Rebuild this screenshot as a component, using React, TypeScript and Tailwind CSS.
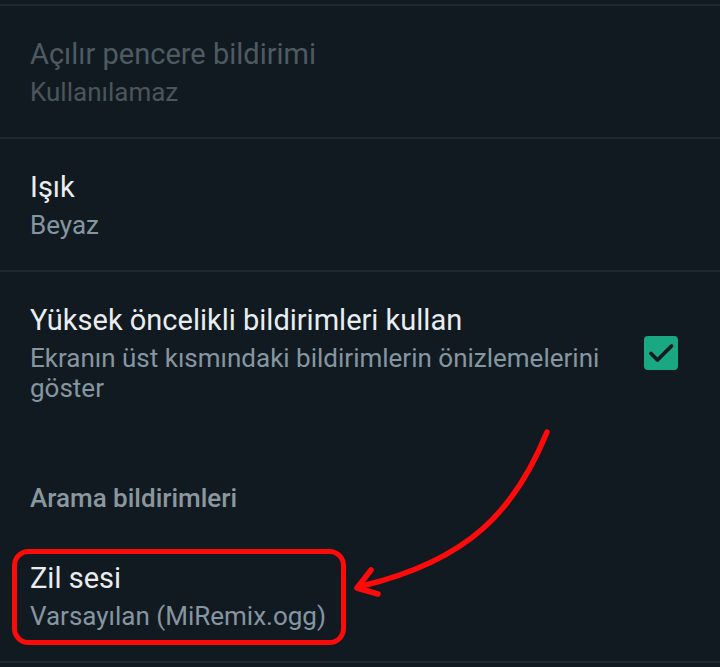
import React from "react";

const font = { fontFamily: "Roboto, 'Noto Sans', sans-serif" };

function Row({
  title,
  subtitle,
  disabled,
  children,
}: {
  title: string;
  subtitle: React.ReactNode;
  disabled?: boolean;
  children?: React.ReactNode;
}) {
  return (
    <div className="flex items-center pl-[30px] pr-[42px] pt-[31px] pb-[30px]">
      <div className="flex-1 min-w-0">
        <div
          className={`text-[29px] leading-[34px] ${disabled ? "text-[#4e5a62]" : "text-[#e9edef]"}`}
        >
          {title}
        </div>
        <div
          className={`mt-[6px] text-[26px] leading-[30px] ${disabled ? "text-[#4a555c]" : "text-[#8696a0]"}`}
        >
          {subtitle}
        </div>
      </div>
      {children}
    </div>
  );
}

function Divider() {
  return <div className="h-[2px] bg-[#1f282f]" />;
}

export default function App() {
  return (
    <div className="relative w-[720px] h-[667px] overflow-hidden bg-[#121a21]" style={font}>
      <div className="h-[4px]" />
      <Divider />
      <Row title="Açılır pencere bildirimi" subtitle="Kullanılamaz" disabled />
      <Divider />
      <Row title="Işık" subtitle="Beyaz" />
      <Divider />
      <Row
        title="Yüksek öncelikli bildirimleri kullan"
        subtitle={
          <span className="block pr-[28px]">
            Ekranın üst kısmındaki bildirimlerin önizlemelerini göster
          </span>
        }
      >
        <div className="w-[34px] h-[34px] rounded-[4px] bg-[#1aa883] shrink-0">
          <svg width="34" height="34" viewBox="0 0 34 34" fill="none">
            <path d="M7 17.5l6.5 6.5L27.5 10" stroke="#111b21" strokeWidth="3.8" strokeLinecap="round" strokeLinejoin="round" />
          </svg>
        </div>
      </Row>
      <div className="pl-[30px] pt-[49px] text-[26px] leading-[32px] font-medium text-[#8a979f]">
        Arama bildirimleri
      </div>
      <div className="pl-[30px] pt-[47px] pb-[30px]">
        <div className="text-[29px] leading-[34px] text-[#e9edef]">Zil sesi</div>
        <div className="mt-[6px] text-[26px] leading-[30px] text-[#8696a0]">Varsayılan (MiRemix.ogg)</div>
      </div>
      <Divider />

      {/* red annotation overlay */}
      <svg className="absolute inset-0 pointer-events-none" width="720" height="667" viewBox="0 0 720 667">
        <rect x="14.5" y="551.5" width="329" height="91" rx="14" fill="none" stroke="#ff0a0a" strokeWidth="5" />
        <path d="M547 432 C 515 510 470 560 362 586" fill="none" stroke="#ff0a0a" strokeWidth="5.5" strokeLinecap="round" />
        <path d="M371 570 L357 588 L378 594" fill="none" stroke="#ff0a0a" strokeWidth="5.5" strokeLinecap="round" strokeLinejoin="round" />
      </svg>
    </div>
  );
}
